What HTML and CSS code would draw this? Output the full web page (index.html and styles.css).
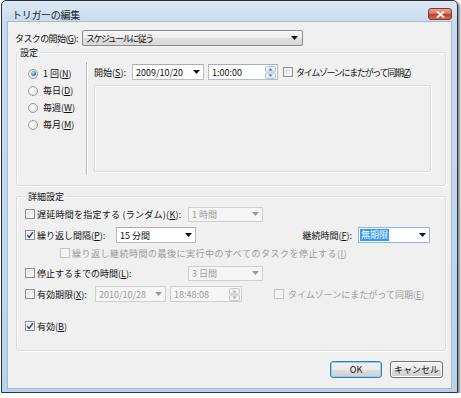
FILE: index.html
```html
<!DOCTYPE html>
<html lang="ja">
<head>
<meta charset="utf-8">
<title>トリガーの編集</title>
<link rel="stylesheet" href="styles.css">
</head>
<body>
<div class="window">
  <div class="titlebar">
    <span class="title">トリガーの編集</span>
    <span class="close"><svg width="9" height="7" viewBox="0 0 9 7"><path d="M1.5 1L7.5 6M7.5 1L1.5 6" stroke="#fff" stroke-width="1.8" stroke-linecap="round"/></svg></span>
  </div>
  <div class="client">
    <div class="start-row">
      <span class="lbl-start">タスクの開始(<u>G</u>):</span>
      <div class="ddlist"><span class="t-sched">スケジュールに従う</span><svg class="arr" width="7" height="4" viewBox="0 0 7 4"><path d="M0 0h7L3.5 4z"/></svg></div>
    </div>
    <fieldset class="group g1">
      <legend>設定</legend>
      <div class="g1-body">
        <div class="radios">
          <div class="radio-row"><span class="radio on"></span><span>1 回(<u>N</u>)</span></div>
          <div class="radio-row"><span class="radio"></span><span>毎日(<u>D</u>)</span></div>
          <div class="radio-row"><span class="radio"></span><span>毎週(<u>W</u>)</span></div>
          <div class="radio-row"><span class="radio"></span><span>毎月(<u>M</u>)</span></div>
        </div>
        <div class="sep"></div>
        <div class="g1-right">
          <div class="start-line">
            <span class="lbl-kaishi">開始(<u>S</u>):</span>
            <div class="field date"><span>2009/10/20</span><svg class="arr" width="7" height="4" viewBox="0 0 7 4"><path d="M0 0h7L3.5 4z"/></svg></div>
            <div class="field time"><span>1:00:00</span><svg class="spin" width="11" height="13" viewBox="0 0 11 13"><rect x=".5" y=".5" width="10" height="5.5" rx="1" fill="#e3edf8" stroke="#b3c8e0"/><rect x=".5" y="7" width="10" height="5.5" rx="1" fill="#e3edf8" stroke="#b3c8e0"/><path d="M3.5 4.6h4L5.5 2.2z" fill="#56698c"/><path d="M3.5 8.4h4L5.5 10.8z" fill="#56698c"/></svg></div>
            <span class="cb"></span>
            <span class="cb-text t-tz1">タイムゾーンにまたがって同期(<u>Z</u>)</span>
          </div>
          <div class="panel"></div>
        </div>
      </div>
    </fieldset>
    <fieldset class="group g2">
      <legend>詳細設定</legend>
      <div class="row row-a">
        <span class="cb"></span>
        <span class="lbl-a t-delay">遅延時間を指定する (ランダム)(<u>K</u>):</span>
        <div class="field combo-small disabled"><span>1 時間</span><svg class="arr" width="7" height="4" viewBox="0 0 7 4"><path d="M0 0h7L3.5 4z"/></svg></div>
      </div>
      <div class="row row-b">
        <span class="cb checked"><svg width="8" height="8" viewBox="0 0 8 8"><path d="M1.2 4.2L3.2 6.4L6.9 1.2" fill="none" stroke="#2a4a96" stroke-width="1.5"/></svg></span>
        <span class="lbl-b">繰り返し間隔(<u>P</u>):</span>
        <div class="field combo-int"><span>15 分間</span><svg class="arr" width="7" height="4" viewBox="0 0 7 4"><path d="M0 0h7L3.5 4z"/></svg></div>
        <span class="lbl-dur">継続時間(<u>F</u>):</span>
        <div class="field combo-dur"><span class="sel">無期限</span><svg class="arr" width="7" height="4" viewBox="0 0 7 4"><path d="M0 0h7L3.5 4z"/></svg></div>
      </div>
      <div class="row row-c">
        <span class="cb disabled"></span>
        <span class="dis-text t-stop">繰り返し継続時間の最後に実行中のすべてのタスクを停止する(<u>I</u>)</span>
      </div>
      <div class="row row-d">
        <span class="cb"></span>
        <span class="lbl-a">停止するまでの時間(<u>L</u>):</span>
        <div class="field combo-small disabled"><span>3 日間</span><svg class="arr" width="7" height="4" viewBox="0 0 7 4"><path d="M0 0h7L3.5 4z"/></svg></div>
      </div>
      <div class="row row-e">
        <span class="cb"></span>
        <span class="lbl-e">有効期限(<u>X</u>):</span>
        <div class="field date2 disabled"><span>2010/10/28</span><svg class="arr" width="7" height="4" viewBox="0 0 7 4"><path d="M0 0h7L3.5 4z"/></svg></div>
        <div class="field time2 disabled"><span>18:48:08</span><svg class="spin" width="11" height="13" viewBox="0 0 11 13"><rect x=".5" y=".5" width="10" height="5.5" rx="1" fill="#f0f0f0" stroke="#c8c8c8"/><rect x=".5" y="7" width="10" height="5.5" rx="1" fill="#f0f0f0" stroke="#c8c8c8"/><path d="M3.5 4.6h4L5.5 2.2z" fill="#a8a8a8"/><path d="M3.5 8.4h4L5.5 10.8z" fill="#a8a8a8"/></svg></div>
        <span class="cb disabled tz2"></span>
        <span class="dis-text t-tz2">タイムゾーンにまたがって同期(<u>E</u>)</span>
      </div>
      <div class="row row-f">
        <span class="cb checked"><svg width="8" height="8" viewBox="0 0 8 8"><path d="M1.2 4.2L3.2 6.4L6.9 1.2" fill="none" stroke="#2a4a96" stroke-width="1.5"/></svg></span>
        <span>有効(<u>B</u>)</span>
      </div>
    </fieldset>
    <div class="buttons">
      <button class="btn default">OK</button>
      <button class="btn">キャンセル</button>
    </div>
  </div>
</div>
</body>
</html>
```

FILE: styles.css
```css
* { box-sizing: border-box; }
html, body { margin: 0; padding: 0; background: #fff; }
body {
  font-family: "Noto Sans CJK JP", "Noto Sans", sans-serif;
  font-size: 9px;
  line-height: 11px;
  color: #111;
  white-space: nowrap;
}
u { text-decoration: underline; text-underline-offset: 1px; text-decoration-thickness: 1px; }

.t-sched { letter-spacing: -1.5px; }
.t-tz1 { letter-spacing: -1.3px; }
.t-stop { letter-spacing: 0.5px; }
.t-delay { letter-spacing: 0.25px; }

.window {
  width: 457px;
  height: 393px;
  margin-left: 1px;
  border: 1px solid #27333f;
  border-radius: 5px 5px 0 0;
  background: linear-gradient(#dfe9f5, #c8daef 21px, #bad3ec);
  box-shadow: 2px 2px 3px rgba(0, 0, 0, 0.5);
  display: flex;
  flex-direction: column;
  padding: 0 6px 4px;
}
.titlebar {
  height: 21px;
  display: flex;
  align-items: flex-start;
  justify-content: space-between;
}
.title {
  font-size: 10px;
  letter-spacing: -0.3px;
  margin: 8px 0 0 4px;
  color: #1a1a1a;
}
.close {
  width: 24px;
  height: 12px;
  margin: 7px -1px 0 0;
  border: 1px solid #7d3a33;
  border-radius: 3px;
  background: linear-gradient(#eaa592, #d6765f 45%, #c2402b 55%, #d46a50);
  display: flex;
  align-items: center;
  justify-content: center;
}
.close svg { display: block; }

.client {
  flex: 1;
  background: #f0f0f0;
  box-shadow: 0 0 0 1px #a5bad0;
  display: flex;
  flex-direction: column;
  padding-top: 8px;
}

.arr { display: block; flex: none; }
.arr path { fill: #111; }
.disabled .arr path { fill: #9a9a9a; }
.spin { display: block; flex: none; }

.start-row {
  display: flex;
  align-items: center;
  height: 16px;
  margin-left: 7px;
}
.lbl-start { width: 67px; flex: none; letter-spacing: -0.6px; }
.ddlist {
  width: 221px;
  height: 16px;
  border: 1px solid #8c8c8c;
  border-radius: 2px;
  background: linear-gradient(#f6f6f6, #ececec 50%, #e0e0e0 51%, #d8d8d8);
  display: flex;
  align-items: center;
  justify-content: space-between;
  padding: 0 4px 0 3px;
}

.group {
  margin: 0 0 0 8px;
  width: 430px;
  padding: 0;
  border: 1px solid #d5dfe5;
  border-radius: 3px;
  box-shadow: inset 1px 1px 0 #fff, 1px 1px 0 #fff;
  min-width: 0;
}
.group legend {
  padding: 0 1px;
  margin-left: 2px;
  line-height: 11px;
}
.g1 { margin-top: 1px; padding: 4px 0 10px; }
.g1-body { display: flex; height: 113px; }
.radios {
  width: 69px;
  flex: none;
  padding: 3px 0 0 11px;
}
.radio-row {
  height: 17px;
  display: flex;
  align-items: center;
}
.radio {
  width: 10px;
  height: 10px;
  border-radius: 50%;
  border: 1px solid #999;
  background: radial-gradient(circle at 35% 35%, #fdfdfd, #dedede);
  margin-right: 5px;
  display: flex;
  align-items: center;
  justify-content: center;
  flex: none;
}
.radio.on::after {
  content: "";
  width: 5px;
  height: 5px;
  border-radius: 50%;
  background: radial-gradient(circle at 40% 35%, #c6e6fb, #3b7fc8 60%, #1d4f95);
}
.sep {
  width: 2px;
  flex: none;
  border-left: 1px solid #b9b9b9;
  border-right: 1px solid #fff;
}
.g1-right {
  padding-left: 6px;
  display: flex;
  flex-direction: column;
}
.start-line {
  margin-top: 2px;
  height: 16px;
  display: flex;
  align-items: center;
}
.lbl-kaishi { width: 38px; flex: none; }

.field {
  height: 16px;
  border: 1px solid #b8bcc4;
  border-top-color: #abadb3;
  background: #fff;
  display: flex;
  align-items: center;
  justify-content: space-between;
  padding: 0 3px 0 3px;
  flex: none;
}
.field.disabled {
  background: #f6f6f6;
  border-color: #cfcfcf;
  color: #9a9a9a;
}
.date { width: 72px; }
.time { width: 70px; margin-left: 4px; padding-right: 1px; }
.start-line .cb { margin-left: 5px; margin-right: 3px; }

.panel {
  margin-top: 5px;
  width: 337px;
  height: 87px;
  border: 1px solid #d5dfe5;
  border-radius: 2px;
  box-shadow: inset 1px 1px 0 #fff, 1px 1px 0 #fff;
}

.cb {
  width: 10px;
  height: 10px;
  border: 1px solid #8e8f8f;
  background: linear-gradient(135deg, #d9d9d9, #f6f6f6 70%);
  box-shadow: inset 0 0 0 1px #f4f4f4;
  flex: none;
  display: flex;
  align-items: center;
  justify-content: center;
}
.cb.checked { background: linear-gradient(135deg, #e4e4e4, #fbfbfb); }
.cb svg { display: block; }
.cb.disabled {
  border-color: #c6c6c6;
  background: #f4f4f4;
  box-shadow: none;
}

.g2 { margin-top: 5px; padding: 4px 15px 16px 8px; }
.row {
  height: 16px;
  display: flex;
  align-items: center;
}
.row > .cb { margin-right: 2px; }
.row-b { margin-top: 5px; }
.row-c { margin-top: 2px; padding-left: 35px; }
.row-d { margin-top: 4px; }
.row-e { margin-top: 5px; }
.row-f { margin-top: 16px; }
.lbl-a { width: 151px; flex: none; }
.lbl-b { width: 79px; flex: none; }
.lbl-e { width: 58px; flex: none; }
.combo-small { width: 75px; height: 15px; }
.combo-int { width: 80px; }
.lbl-dur { margin-left: auto; margin-right: 6px; }
.combo-dur {
  width: 72px;
  border-color: #8fb8e2;
  padding-left: 1px;
}
.sel {
  background: #3399ff;
  color: #fff;
  padding: 0 1px;
  line-height: 12px;
}
.dis-text { color: #9a9a9a; }
.date2 { width: 71px; }
.time2 { width: 72px; margin-left: 4px; padding-right: 1px; }
.row .tz2 { margin-left: 32px; margin-right: 4px; }

.buttons {
  display: flex;
  justify-content: flex-end;
  gap: 8px;
  margin-top: 10px;
  padding-right: 8px;
}
.btn {
  font: inherit;
  color: #111;
  width: 52px;
  height: 17px;
  padding: 0;
  border: 1px solid #707070;
  border-radius: 3px;
  background: linear-gradient(#f2f2f2, #ebebeb 50%, #dddddd 51%, #cfcfcf);
  box-shadow: inset 0 0 0 1px #fcfcfc;
}
.btn.default {
  border-color: #3c7fb1;
  box-shadow: inset 0 0 0 1px #8ad0f5;
}
.btn + .btn { width: 53px; }
```
